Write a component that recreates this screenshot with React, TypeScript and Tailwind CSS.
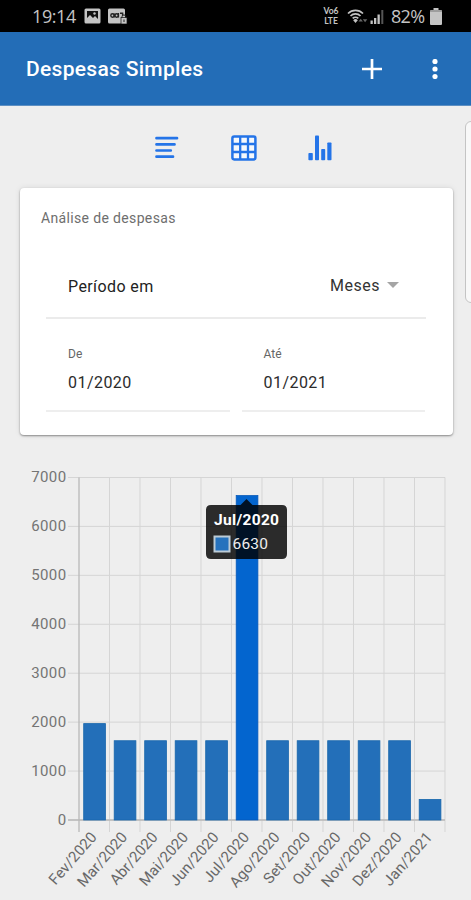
const ITEMS = [
  { label: 'Fev/2020', value: 1970 },
  { label: 'Mar/2020', value: 1620 },
  { label: 'Abr/2020', value: 1620 },
  { label: 'Mai/2020', value: 1620 },
  { label: 'Jun/2020', value: 1620 },
  { label: 'Jul/2020', value: 6630 },
  { label: 'Ago/2020', value: 1620 },
  { label: 'Set/2020', value: 1620 },
  { label: 'Out/2020', value: 1620 },
  { label: 'Nov/2020', value: 1620 },
  { label: 'Dez/2020', value: 1620 },
  { label: 'Jan/2021', value: 420 },
]
const TICKS = [0, 1000, 2000, 3000, 4000, 5000, 6000, 7000]

const LEFT = 79
const RIGHT = 445
const BASE = 385
const STEP = (RIGHT - LEFT) / ITEMS.length
const toY = (value: number) => BASE - value * 0.04893

function StatusBar() {
  return (
    <div className="h-8 bg-black text-[#c4c4c4] flex items-center pl-[32px] pr-[29px]">
      <span className="w-[52px] text-[18px] leading-8 tracking-[-0.4px] font-['Open_Sans',sans-serif]">19:14</span>
      <svg width="17" height="16" viewBox="0 0 17 16">
        <rect x="0.5" y="0.5" width="16" height="15" rx="1.5" fill="currentColor" />
        <path d="M3 3h11v10H3z" fill="#111" />
        <path d="M3 13v-3l3-3 3 3 2-2 3 3v2z" fill="currentColor" />
        <circle cx="10.5" cy="5.5" r="1.2" fill="currentColor" />
      </svg>
      <svg width="20" height="16" viewBox="0 0 20 16" className="ml-[7px]">
        <rect x="0" y="0.5" width="17" height="15" rx="1.5" fill="currentColor" />
        <g fill="none" stroke="#222" strokeWidth="1.4">
          <circle cx="4.5" cy="7.5" r="1.7" />
          <circle cx="8.7" cy="7.5" r="1.7" />
          <path d="M6.2 9.6v-4M10.4 5v4.5M12 5.2h2.6v2.5" />
        </g>
        <path d="M14 10V8.800a1.900 1.900 0 0 1 3.800 0V10" fill="none" stroke="#222" />
        <rect x="13" y="9.5" width="6" height="6.500" fill="currentColor" stroke="#111" strokeWidth="0.7" />
        <path d="M16 11.500v2.500" stroke="#222" />
      </svg>
      <div className="ml-auto flex items-center">
        <div className="w-[18px] text-center text-[8.5px] leading-[10px] font-bold font-['Lato',sans-serif]">
          <div>Vo6</div>
          <div>LTE</div>
        </div>
        <svg width="38" height="20" viewBox="0 0 38 20" className="ml-[7px]">
          <g fill="none" stroke="currentColor" strokeWidth="1.7">
            <path d="M1 7.500a10.500 10.500 0 0 1 15 0" />
            <path d="M3.500 10a7 7 0 0 1 10 0" />
            <path d="M5.700 12.400a4 4 0 0 1 5.600 0" />
          </g>
          <path d="m8.500 17-2.300-2.800a3.200 3.200 0 0 1 4.600 0z" fill="currentColor" />
          <path d="m11.500 15.500 2.200-2.700 2.200 2.700zM15.800 13.200h4.500l-2.200 3z" fill="#666" />
          <g fill="currentColor">
            <path d="M23.500 14.500h2.300V18h-2.300zM27 12h2.300v6H27zM30.500 8.500h2.300V18h-2.300z" />
            <path d="M34.300 4h2v14h-2z" fill="#555" />
          </g>
        </svg>
        <span className="ml-[6px] w-[36px] text-[18px] leading-8 tracking-[-0.700px] whitespace-nowrap font-['Open_Sans',sans-serif]">82%</span>
        <svg width="12" height="17" viewBox="0 0 12 17" className="ml-[3px] mt-px">
          <path d="M3.500 0h5v2H11q1 0 1 1v13q0 1-1 1H1q-1 0-1-1V3q0-1 1-1h2.500z" fill="currentColor" />
          <path d="M0 3h12" stroke="#777" />
        </svg>
      </div>
    </div>
  )
}

function AppBar() {
  return (
    <header className="h-[74px] bg-[#236db7] border-b border-[#5d8fc2] text-white flex items-center pl-[26px] pr-[33px]">
      <h1 className="text-[21px] font-medium tracking-[0.3px] pt-[2px]">Despesas Simples</h1>
      <svg width="20" height="20" viewBox="0 0 20 20" className="ml-auto">
        <path d="M10 0v20M0 10h20" stroke="currentColor" strokeWidth="2.7" />
      </svg>
      <svg width="6" height="20" viewBox="0 0 6 20" fill="currentColor" className="ml-[50px]">
        <circle cx="3" cy="2.5" r="2.6" />
        <circle cx="3" cy="10" r="2.6" />
        <circle cx="3" cy="17.5" r="2.6" />
      </svg>
    </header>
  )
}

function ViewTabs() {
  return (
    <nav className="h-[82px] flex items-start pt-[29px] pl-[155px] text-[#2474e8]">
      <svg width="24" height="26" viewBox="0 0 24 26">
        <path d="M1.500 3.200h20.500M1.500 9.400h18M1.500 15.500h14.300M1.500 21.700h16.500" stroke="currentColor" strokeWidth="2.7" strokeLinecap="round" />
      </svg>
      <svg width="26" height="26" viewBox="0 0 26 26" className="ml-[52px]">
        <rect x="1.4" y="1.4" width="23" height="23" rx="1.8" fill="#f5f8fc" stroke="currentColor" strokeWidth="2.5" />
        <path d="M9.200 1v24M17 1v24M1 9h24M1 17h24" stroke="currentColor" strokeWidth="2.300" />
      </svg>
      <svg width="24" height="26" viewBox="0 0 24 26" fill="currentColor" className="ml-[51px]">
        <rect x="0.4" y="18" width="4.4" height="7.2" rx="0.8" />
        <rect x="7" y="0.4" width="4" height="24.8" rx="0.8" />
        <rect x="13.2" y="14" width="4" height="11.2" rx="0.8" />
        <rect x="19.3" y="7.5" width="4.2" height="17.7" rx="0.8" />
      </svg>
    </nav>
  )
}

function DateField({ label, value }: { label: string; value: string }) {
  return (
    <div className="flex-1 h-[67px] border-b-2 border-[#eeeeee] pl-[22px] pt-px">
      <div className="text-[12px] leading-4 text-[#666]">{label}</div>
      <div className="mt-[11px] text-[16px] leading-5 tracking-[0.45px] text-[#2b2b2b]">{value}</div>
    </div>
  )
}

function FilterCard() {
  return (
    <section className="ml-5 mr-[18px] h-[247px] rounded bg-white px-[26px] shadow-[0_1px_2px_rgba(0,0,0,0.4),0_0_6px_rgba(0,0,0,0.09)]">
      <h2 className="-ml-[5px] pt-[20px] text-[14px] leading-5 tracking-[0.35px] text-[#6e6e6e]">Análise de despesas</h2>
      <div className="mt-[26px] h-[65px] border-b-2 border-[#ebebeb] flex items-center pl-[22px] pr-[27px] mr-px">
        <span className="text-[16px] tracking-[0.4px] text-[#222] pt-[3px]">Período em</span>
        <span className="ml-auto text-[16px] tracking-[0.5px] text-[#333]">Meses</span>
        <svg width="12" height="6" viewBox="0 0 12 6" className="ml-[7px] -mt-[2px]">
          <path d="M0 0h12L6 6z" fill="#a5a5a5" />
        </svg>
      </div>
      <div className="mt-[26px] mr-[2px] flex gap-3">
        <DateField label="De" value="01/2020" />
        <DateField label="Até" value="01/2021" />
      </div>
    </section>
  )
}

function ExpenseChart() {
  return (
    <svg width="471" height="465" viewBox="0 0 471 465" className="block font-['Roboto',sans-serif]">
      <g stroke="#d5d5d5" strokeWidth="1">
        {TICKS.map((t) => (
          <line key={t} x1={LEFT - 11} x2={RIGHT} y1={toY(t)} y2={toY(t)} />
        ))}
        {ITEMS.map((item, i) => (
          <line key={item.label} x1={LEFT + STEP * (i + 1)} x2={LEFT + STEP * (i + 1)} y1={toY(7000)} y2={BASE + 12} />
        ))}
      </g>
      <g stroke="#b8b8b8" strokeWidth="1.3">
        <line x1={LEFT} x2={LEFT} y1={toY(7000)} y2={BASE + 12} />
        <line x1={LEFT - 11} x2={RIGHT} y1={BASE} y2={BASE} />
      </g>
      <g fill="#747474" fontSize="15" textAnchor="end">
        {TICKS.map((t) => (
          <text key={t} x="66.5" y={toY(t) + 4.5} letterSpacing="0.4">{t}</text>
        ))}
      </g>
      {ITEMS.map((item, i) => (
        <rect
          key={item.label}
          x={LEFT + STEP * i + 4.7}
          y={toY(item.value)}
          width="21.7"
          height={BASE - toY(item.value)}
          fill={item.label === 'Jul/2020' ? '#0365cf' : '#236fb9'}
          stroke={item.label === 'Jul/2020' ? '#0759b9' : '#1766ac'}
          strokeWidth="0.8"
        />
      ))}
      <g fill="#686868" fontSize="15" textAnchor="end">
        {ITEMS.map((item, i) => (
          <text
            key={item.label}
            transform={`translate(${LEFT + STEP * i + 18.5} ${BASE + 17.5}) rotate(-49)`}
            letterSpacing="0.1"
          >
            {item.label}
          </text>
        ))}
      </g>
      <path
        d="M211 70h29.500l6-6 6 6H282q5 0 5 5v44q0 5-5 5h-71q-5 0-5-5V75q0-5 5-5z"
        fill="#000"
        fillOpacity="0.82"
      />
      <text x="214" y="90" fill="#fff" fontSize="15.5" fontWeight="700" textLength="65">Jul/2020</text>
      <rect x="214.5" y="101.5" width="15" height="15" fill="#2672bd" stroke="#bccbd6" strokeWidth="2" />
      <text x="232.5" y="113.5" fill="#eee" fontSize="15.5" textLength="35.5">6630</text>
    </svg>
  )
}

export default function App() {
  return (
    <div className="relative w-[471px] h-[900px] overflow-hidden bg-[#eeeeee] font-['Roboto',sans-serif]">
      <StatusBar />
      <AppBar />
      <ViewTabs />
      <FilterCard />
      <ExpenseChart />
      {/* edge of the next panel */}
      <div className="absolute left-[465px] top-[121px] w-10 h-[182px] rounded-md border border-[#c4c4c4] bg-[#f8f8f8]" />
    </div>
  )
}
